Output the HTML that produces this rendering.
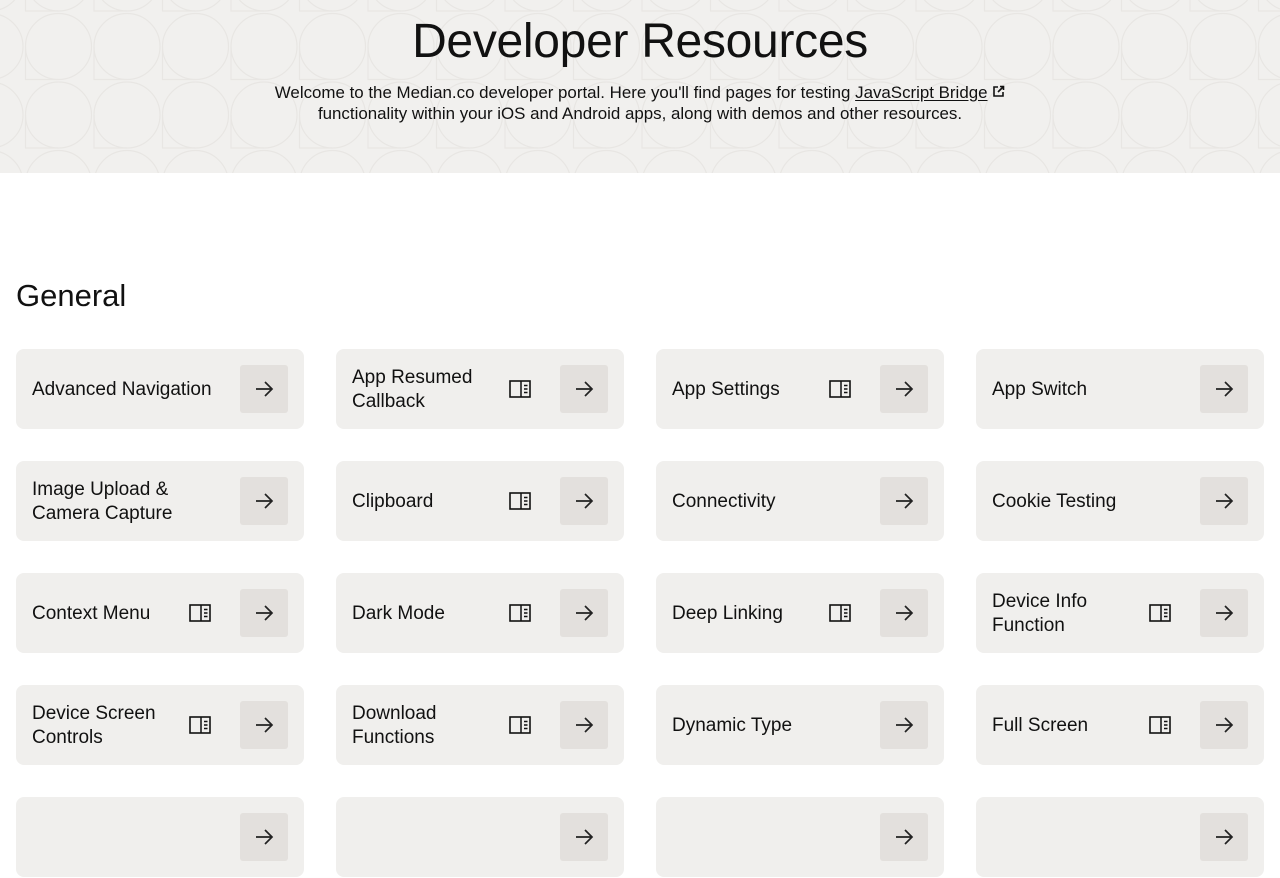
<!DOCTYPE html><html><head><style>
*{margin:0;padding:0;box-sizing:border-box}
html,body{width:1280px;height:800px;overflow:hidden}
body{background:#fff;font-family:"Liberation Sans",sans-serif;color:#111}
.hero{position:absolute;left:0;top:0;width:1280px;height:173px;background:#f1f0ee;overflow:hidden}
.bg{position:absolute;left:0;top:0}
h1{position:absolute;top:14px;width:100%;text-align:center;font-weight:400;font-size:48px;letter-spacing:-0.3px}
.sub{position:absolute;top:82px;width:100%;text-align:center;font-size:16.9px;line-height:21px}
.sub u{text-underline-offset:2px}
h2{position:absolute;left:16px;top:278px;font-weight:400;font-size:31px}
.card{position:absolute;width:288px;height:80px;background:#f0efed;border-radius:8px}
.t{position:absolute;left:16px;top:1px;height:80px;display:flex;align-items:center;font-size:19px;line-height:24px;width:160px}
.t.w{width:205px}
.b{position:absolute;right:16px;top:16px;width:48px;height:48px;background:#e3e0dd;border-radius:3px}
.b svg{position:absolute;left:14px;top:14px}
.d{position:absolute;left:173px;top:31px}
</style></head><body>
<div class="hero">
<svg class="bg" width="1280" height="173"><defs><pattern id="p" width="68.5" height="68.5" patternUnits="userSpaceOnUse" x="-44" y="-56"><circle cx="34" cy="34" r="33" fill="none" stroke="#e8e6e3" stroke-width="1.2"/><path d="M1 34V67H34" fill="none" stroke="#e8e6e3" stroke-width="1.2"/></pattern></defs><rect width="1280" height="173" fill="url(#p)"/></svg>
<h1>Developer Resources</h1>
<div class="sub">Welcome to the Median.co developer portal. Here you'll find pages for testing <u>JavaScript Bridge</u> <svg width="13" height="13" viewBox="0 0 13 13" style="vertical-align:0"><path d="M6 2H2v9h9V7M8 1.5h3.5V5M11.5 1.5L6 7" fill="none" stroke="#111" stroke-width="1.6"/></svg><br>functionality within your iOS and Android apps, along with demos and other resources.</div>
</div>
<h2>General</h2>
<div id="g"></div>
<script>
var items=[["Advanced Navigation",0],["App Resumed Callback",1],["App Settings",1],["App Switch",0],["Image Upload &amp; Camera Capture",0],["Clipboard",1],["Connectivity",0],["Cookie Testing",0],["Context Menu",1],["Dark Mode",1],["Deep Linking",1],["Device Info Function",1],["Device Screen Controls",1],["Download Functions",1],["Dynamic Type",0],["Full Screen",1],["",0],["",0],["",0],["",0]];
var h="";items.forEach(function(it,i){var x=16+(i%4)*320,y=349+Math.floor(i/4)*112;
var w=it[1]?'':(it[0].indexOf("Image")==0?'':' w');
h+='<div class="card" style="left:'+x+'px;top:'+y+'px"><div class="t'+w+'">'+it[0]+'</div>'+(it[1]?'<svg class="d" width="22" height="18" viewBox="0 0 22 18"><rect x="1" y="1" width="20" height="16" fill="none" stroke="#111" stroke-width="1.6"/><path d="M12 1v16M15 5.5h3.5M15 9h3.5M15 12.5h3.5" stroke="#111" stroke-width="1.5"/></svg>':'')+'<div class="b"><svg width="20" height="20" viewBox="0 0 20 20"><path d="M2 10h16M11 3l7 7-7 7" fill="none" stroke="#222" stroke-width="1.7"/></svg></div></div>';});
document.getElementById("g").innerHTML=h;
</script>
</body></html>
